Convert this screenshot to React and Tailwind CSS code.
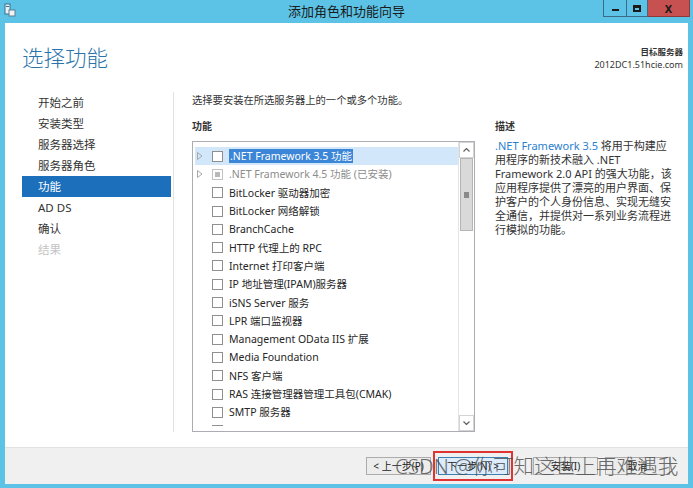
import React from "react";

const FONT = { fontFamily: '"Noto Sans", "Noto Sans CJK SC", sans-serif' };

const features = [
  { name: ".NET Framework 3.5 功能", arrow: true, selected: true },
  { name: ".NET Framework 4.5 功能 (已安装)", arrow: true, installed: true },
  { name: "BitLocker 驱动器加密" },
  { name: "BitLocker 网络解锁" },
  { name: "BranchCache" },
  { name: "HTTP 代理上的 RPC" },
  { name: "Internet 打印客户端" },
  { name: "IP 地址管理(IPAM)服务器" },
  { name: "iSNS Server 服务" },
  { name: "LPR 端口监视器" },
  { name: "Management OData IIS 扩展" },
  { name: "Media Foundation" },
  { name: "NFS 客户端" },
  { name: "RAS 连接管理器管理工具包(CMAK)" },
  { name: "SMTP 服务器" },
  { name: "SNMP 服务" },
];

const steps = ["开始之前", "安装类型", "服务器选择", "服务器角色", "功能", "AD DS", "确认", "结果"];

function Arrow() {
  return (
    <svg width="6" height="8" viewBox="0 0 6 8">
      <path d="M0.5 0.5 L5 4 L0.5 7.5 Z" fill="none" stroke="#a8a8a8" strokeWidth="1" />
    </svg>
  );
}

function FeatureRow({ f }) {
  return (
    <div
      className={
        "flex items-center h-[18.3px] ml-[2px] pl-[2px] " +
        (f.selected ? "bg-[#d2e7f9]" : "")
      }
    >
      <span className="w-[6px] flex items-center">{f.arrow && <Arrow />}</span>
      <span
        className={
          "ml-[9px] w-[11px] h-[11px] border flex items-center justify-center bg-white " +
          (f.installed ? "border-[#c2c2c2]" : "border-[#8e8f8f]")
        }
      >
        {f.installed && <span className="w-[5px] h-[5px] bg-[#b8b8b8]" />}
      </span>
      <span
        className={
          "ml-[6px] text-[10.5px] whitespace-nowrap leading-[14px] " +
          (f.selected
            ? "bg-[#3b86d6] text-white px-px -ml-px"
            : f.installed
            ? "text-[#8c8c8c]"
            : "text-[#262626]")
        }
      >
        {f.name}
      </span>
    </div>
  );
}

function Scrollbar() {
  return (
    <div className="w-[16px] border-l border-[#e3e3e3] flex flex-col bg-white">
      <div className="h-[16px] border border-[#d4d4d4] flex items-center justify-center">
        <svg width="7" height="4" viewBox="0 0 7 4">
          <path d="M0.5 3.5 L3.5 0.5 L6.5 3.5" fill="none" stroke="#606060" strokeWidth="1.2" />
        </svg>
      </div>
      <div className="h-[73px] mx-px bg-[#d9d9d9] border border-[#b5b5b5] flex items-center justify-center">
        <span className="w-[5px] h-[6px] bg-[#8a8a8a]" />
      </div>
      <div className="flex-1" />
      <div className="h-[16px] border border-[#d4d4d4] flex items-center justify-center">
        <svg width="7" height="4" viewBox="0 0 7 4">
          <path d="M0.5 0.5 L3.5 3.5 L6.5 0.5" fill="none" stroke="#606060" strokeWidth="1.2" />
        </svg>
      </div>
    </div>
  );
}

function Button({ children, focused }) {
  return (
    <button
      className={
        "h-[18px] text-[10px] text-[#222] border flex items-center justify-center " +
        (focused
          ? "w-[70px] bg-[#dcecfc] border-[#3c7fb1]"
          : "w-[65px] bg-[#ececec] border-[#acacac]")
      }
    >
      {children}
    </button>
  );
}

export default function App() {
  return (
    <div className="relative w-[693px] h-[488px] bg-[#5cc3e6] flex flex-col overflow-hidden" style={FONT}>
      {/* title bar */}
      <div className="relative h-[23px] shrink-0 flex items-center justify-center">
        <svg className="absolute left-[4px] top-[3px]" width="12" height="14" viewBox="0 0 12 14">
          <rect x="1" y="1" width="5" height="10" fill="#e8f4fa" stroke="#3b6e8c" strokeWidth="1" />
          <rect x="5" y="7" width="6" height="6" fill="#f2f2f2" stroke="#5a7f95" strokeWidth="1" />
          <rect x="2" y="3" width="3" height="1" fill="#3b6e8c" />
        </svg>
        <span className="text-[13px] text-[#1b1b1b]">添加角色和功能向导</span>
        <div className="absolute right-[3px] top-0 flex h-[17px]">
          <div className="w-[24px] border border-[#3c6b86] border-t-0 flex items-end justify-center pb-[5px]">
            <span className="w-[7px] h-[2px] bg-[#1a1a1a]" />
          </div>
          <div className="w-[21px] border border-l-0 border-t-0 border-[#3c6b86] flex items-center justify-center">
            <span className="w-[8px] h-[7px] border-2 border-[#1a1a1a] border-t-[3px]" />
          </div>
          <div className="w-[42px] bg-[#c75050] border border-l-0 border-t-0 border-[#8f3a3a] flex items-center justify-center">
            <span className="text-[11px] font-bold text-[#1a1a1a] leading-none">X</span>
          </div>
        </div>
      </div>

      {/* body */}
      <div className="flex-1 min-h-0 mx-[5px] mb-[4px] bg-white flex flex-col">
        {/* header */}
        <div className="h-[67px] shrink-0 flex justify-between pl-[17px] pr-[5px] pt-[21px]">
          <h1 className="text-[21.5px] leading-[28px] font-light text-[#2b73aa]">选择功能</h1>
          <div className="text-right pt-[2px]">
            <div className="text-[8.5px] leading-[12px] font-semibold text-[#333]">目标服务器</div>
            <div className="text-[9px] leading-[13px] text-[#333]">2012DC1.51hcie.com</div>
          </div>
        </div>

        {/* main */}
        <div className="flex-1 min-h-0 flex pb-[15px]">
          <div className="w-[168px] pl-[17px] pr-[2px] pt-[2px]">
            {steps.map((s) => (
              <div
                key={s}
                className={
                  "h-[21px] flex items-center pl-[16px] text-[11.5px] " +
                  (s === "功能"
                    ? "bg-[#1c6fba] text-white"
                    : s === "结果"
                    ? "text-[#c4c4c4]"
                    : "text-[#333]")
                }
              >
                {s}
              </div>
            ))}
          </div>
          <div className="w-px mt-[2px] bg-[#e2e2e2]" />

          <div className="flex-1 min-h-0 flex flex-col pl-[18px] pt-[3px]">
            <p className="text-[10.3px] leading-[14px] text-[#333]">选择要安装在所选服务器上的一个或多个功能。</p>
            <div className="flex-1 min-h-0 flex mt-[12px] gap-[20px]">
              <div className="w-[283px] min-h-0 flex flex-col">
                <div className="text-[10px] leading-[14px] font-bold text-[#333]">功能</div>
                <div className="flex-1 min-h-0 mt-[8px] border border-[#abadb3] flex overflow-hidden">
                  <div className="flex-1 min-h-0 flex flex-col">
                    <div className="flex-1 min-h-0 mt-[5px] mb-[5px] overflow-hidden">
                      {features.map((f) => (
                        <FeatureRow key={f.name} f={f} />
                      ))}
                    </div>
                  </div>
                  <Scrollbar />
                </div>
              </div>

              <div className="flex-1">
                <div className="text-[10px] leading-[14px] font-bold text-[#333]">描述</div>
                <p className="mt-[6px] text-[11px] leading-[14px] text-[#333] whitespace-nowrap">
                  <span className="text-[#2b7fd0]">.NET Framework 3.5</span> 将用于构建应
                  <br />
                  用程序的新技术融入 .NET
                  <br />
                  Framework 2.0 API 的强大功能，该
                  <br />
                  应用程序提供了漂亮的用户界面、保
                  <br />
                  护客户的个人身份信息、实现无缝安
                  <br />
                  全通信，并提供对一系列业务流程进
                  <br />
                  行模拟的功能。
                </p>
              </div>
            </div>
          </div>
        </div>

        {/* footer */}
        <div className="h-[37px] shrink-0 bg-[#f0f0f0] border-t border-[#e2e2e2] flex items-center justify-end pr-[18px]">
          <Button>&lt; 上一步(P)</Button>
          <div className="ml-[2px] border-2 border-[#e03434] px-[3px] py-[4px]">
            <Button focused>下一步(N) &gt;</Button>
          </div>
          <div className="ml-[20px]">
            <Button>安装(I)</Button>
          </div>
          <div className="ml-[7px]">
            <Button>取消</Button>
          </div>
        </div>
      </div>

      {/* watermark */}
      <div className="absolute left-[395px] top-[453px] text-[20.6px] leading-[26px] font-light text-[#4a4a4a] opacity-80 whitespace-nowrap pointer-events-none">
        CSDN @你可知这世上再难遇我
      </div>
    </div>
  );
}
